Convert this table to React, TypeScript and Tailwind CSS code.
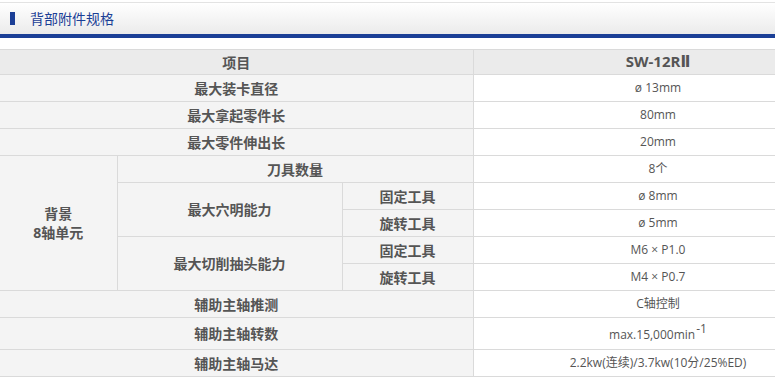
import React from "react"

const font = { fontFamily: '"Open Sans", "Noto Sans CJK SC", sans-serif' }

const lbl = "bg-[#f4f4f4] border border-[#dadada] text-center font-bold text-[14px] text-[#555]"
const val = "bg-white border border-[#dadada] text-center text-[12px] text-[#555]"

export default function App() {
  return (
    <div className="w-[775px] h-[381px] overflow-hidden bg-white" style={font}>
      <div className="border-t border-[#e3e3e3] mt-[2px]">
        <div className="h-[31px] bg-gradient-to-b from-white to-[#ebebeb] flex items-center">
          <span className="ml-[10px] w-[5px] h-[13px] bg-[#1b3f96]" />
          <span className="ml-[15px] text-[14px] text-[#1b3f96]">背部附件规格</span>
        </div>
        <div className="h-[4px] bg-[#1b3f96]" />
      </div>

      <table className="mt-[11px] w-[843px] border-collapse table-fixed">
        <colgroup>
          <col className="w-[117px]" />
          <col className="w-[225px]" />
          <col className="w-[131px]" />
          <col className="w-[370px]" />
        </colgroup>
        <tbody>
          <tr className="h-[25px]">
            <td colSpan={3} className="bg-[#ebebeb] border border-[#dadada] border-l-0 text-center font-bold text-[14px] text-[#555]">项目</td>
            <td className="bg-[#ebebeb] border border-[#dadada] text-center font-bold text-[15px] text-[#555]">
              SW-12R<span style={{ fontFamily: '"DejaVu Sans", sans-serif' }}>Ⅱ</span>
            </td>
          </tr>
          <tr className="h-[27px]">
            <td colSpan={3} className={lbl + " border-l-0"}>最大装卡直径</td>
            <td className={val}>ø 13mm</td>
          </tr>
          <tr className="h-[27px]">
            <td colSpan={3} className={lbl + " border-l-0"}>最大拿起零件长</td>
            <td className={val}>80mm</td>
          </tr>
          <tr className="h-[27px]">
            <td colSpan={3} className={lbl + " border-l-0"}>最大零件伸出长</td>
            <td className={val}>20mm</td>
          </tr>
          <tr className="h-[27px]">
            <td rowSpan={5} className={lbl + " border-l-0 leading-[19px]"}>
              背景
              <br />
              8轴单元
            </td>
            <td colSpan={2} className={lbl}>刀具数量</td>
            <td className={val}>8个</td>
          </tr>
          <tr className="h-[27px]">
            <td rowSpan={2} className={lbl}>最大穴明能力</td>
            <td className={lbl}>固定工具</td>
            <td className={val}>ø 8mm</td>
          </tr>
          <tr className="h-[27px]">
            <td className={lbl}>旋转工具</td>
            <td className={val}>ø 5mm</td>
          </tr>
          <tr className="h-[27px]">
            <td rowSpan={2} className={lbl}>最大切削抽头能力</td>
            <td className={lbl}>固定工具</td>
            <td className={val}>M6 × P1.0</td>
          </tr>
          <tr className="h-[27px]">
            <td className={lbl}>旋转工具</td>
            <td className={val}>M4 × P0.7</td>
          </tr>
          <tr className="h-[27px]">
            <td colSpan={3} className={lbl + " border-l-0"}>辅助主轴推测</td>
            <td className={val}>C轴控制</td>
          </tr>
          <tr className="h-[32px]">
            <td colSpan={3} className={lbl + " border-l-0"}>辅助主轴转数</td>
            <td className={val + " pt-[3px]"}>
              max.15,000min<sup className="text-[12px] relative -top-[6px] ml-[1px]">-1</sup>
            </td>
          </tr>
          <tr className="h-[27px]">
            <td colSpan={3} className={lbl + " border-l-0"}>辅助主轴马达</td>
            <td className={val}>2.2kw(连续)/3.7kw(10分/25%ED)</td>
          </tr>
        </tbody>
      </table>
    </div>
  )
}
